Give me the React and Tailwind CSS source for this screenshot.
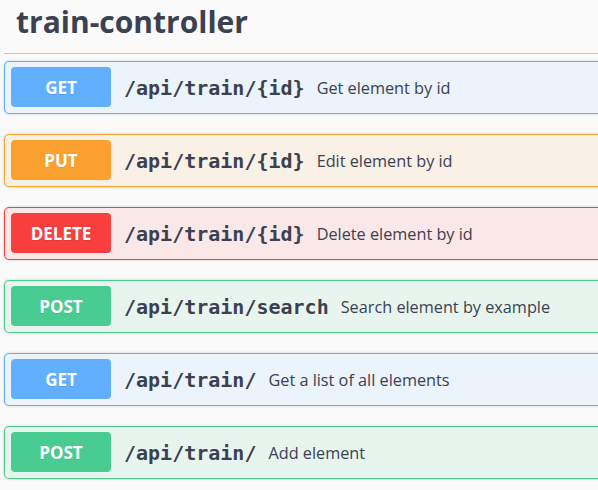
const ops = [
  { id: 1, method: 'GET', path: '/api/train/{id}', desc: 'Get element by id' },
  { id: 2, method: 'PUT', path: '/api/train/{id}', desc: 'Edit element by id' },
  { id: 3, method: 'DELETE', path: '/api/train/{id}', desc: 'Delete element by id' },
  { id: 4, method: 'POST', path: '/api/train/search', desc: 'Search element by example' },
  { id: 5, method: 'GET', path: '/api/train/', desc: 'Get a list of all elements' },
  { id: 6, method: 'POST', path: '/api/train/', desc: 'Add element' },
]

const styles = {
  GET: { row: 'bg-[#ebf3fb] border-[#61affe]', badge: 'bg-[#61affe]' },
  PUT: { row: 'bg-[#f9f0e6] border-[#fca130]', badge: 'bg-[#fca130]' },
  DELETE: { row: 'bg-[#fae7e7] border-[#f93e3e]', badge: 'bg-[#f93e3e]' },
  POST: { row: 'bg-[#e8f5ef] border-[#49cc90]', badge: 'bg-[#49cc90]' },
}

export default function App() {
  return (
    <div className="w-[598px] h-[490px] overflow-hidden bg-[#fafafa] text-[#3b4151] font-['Open_Sans',sans-serif]">
      {/* Tag header */}
      <div className="ml-[4px] w-[640px] h-[54px] border-b border-[#c6c7cb] pl-[12px] flex items-center">
        <h2 className="text-[30px] font-bold leading-none -mt-[9px]">train-controller</h2>
      </div>

      {/* Operations */}
      <div className="mt-[7px] ml-[4px] w-[640px] flex flex-col gap-[20px]">
        {ops.map((op) => (
          <div
            key={op.id}
            className={`flex items-center border rounded-[5px] pl-[6px] pt-[5px] pb-[6px] shadow-[0_0_3px_rgba(0,0,0,0.19)] ${styles[op.method].row}`}
          >
            <div
              className={`w-[100px] h-[40px] pt-[1px] rounded-[4px] flex items-center justify-center text-white font-bold text-[17px] [text-shadow:0_1px_0_rgba(0,0,0,0.1)] ${styles[op.method].badge}`}
            >
              {op.method}
            </div>
            <span className="pl-[13px] pr-[12px] pt-[2px] font-['DejaVu_Sans_Mono',monospace] font-bold text-[20px] leading-none">
              {op.path}
            </span>
            <span className="pt-[2px] text-[16.25px] leading-none">{op.desc}</span>
          </div>
        ))}
      </div>
    </div>
  )
}
